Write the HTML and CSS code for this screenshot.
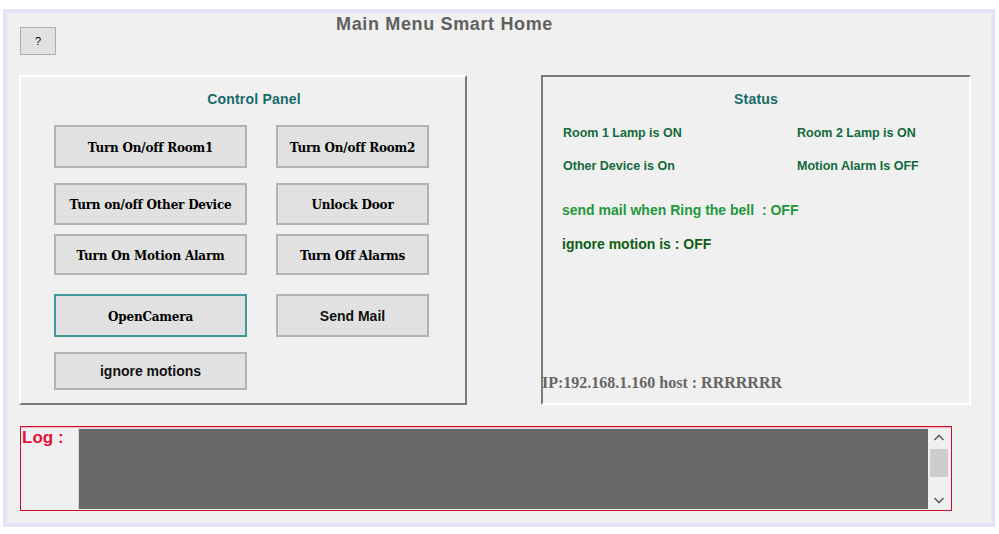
FILE: index.html
```html
<!DOCTYPE html>
<html>
<head>
<meta charset="utf-8">
<title>Main Menu Smart Home</title>
<link rel="stylesheet" href="styles.css">
</head>
<body>
<div class="window">
  <div class="header">
    <button class="help-btn">?</button>
    <h1 class="title">Main Menu Smart Home</h1>
  </div>
  <div class="panels">
    <section class="control-panel">
      <h2 class="group-title cp-title">Control Panel</h2>
      <div class="btn-row row1">
        <button class="btn serif wide">Turn On/off Room1</button>
        <button class="btn serif narrow">Turn On/off Room2</button>
      </div>
      <div class="btn-row row2">
        <button class="btn serif wide">Turn on/off Other Device</button>
        <button class="btn serif narrow">Unlock Door</button>
      </div>
      <div class="btn-row row3">
        <button class="btn serif wide">Turn On Motion Alarm</button>
        <button class="btn serif narrow">Turn Off Alarms</button>
      </div>
      <div class="btn-row row4">
        <button class="btn serif wide focused">OpenCamera</button>
        <button class="btn sans narrow">Send Mail</button>
      </div>
      <div class="btn-row row5">
        <button class="btn sans wide">ignore motions</button>
      </div>
    </section>
    <section class="status-panel">
      <h2 class="group-title">Status</h2>
      <div class="status-grid">
        <span class="stat">Room 1 Lamp is ON</span>
        <span class="stat">Room 2 Lamp is ON</span>
        <span class="stat">Other Device is On</span>
        <span class="stat">Motion Alarm Is OFF</span>
      </div>
      <p class="mail-status">send mail when Ring the bell&nbsp; : OFF</p>
      <p class="motion-status">ignore motion is : OFF</p>
      <p class="ip">IP:192.168.1.160 host : RRRRRRR</p>
    </section>
  </div>
  <div class="log-box">
    <div class="log-label">Log :</div>
    <div class="log-area">
      <div class="log-text"></div>
      <div class="scrollbar">
        <svg class="chev" width="22" height="18" viewBox="0 0 22 18"><path d="M6.5 11 L11 6.5 L15.5 11" fill="none" stroke="#606060" stroke-width="1.6"/></svg>
        <div class="thumb"></div>
        <div class="track"></div>
        <svg class="chev" width="22" height="18" viewBox="0 0 22 18"><path d="M6.5 7 L11 11.5 L15.5 7" fill="none" stroke="#606060" stroke-width="1.6"/></svg>
      </div>
    </div>
  </div>
</div>
</body>
</html>
```
FILE: styles.css
```css
html, body {
  margin: 0;
  padding: 0;
  background: #ffffff;
}

body {
  font-family: "Liberation Sans", Arial, sans-serif;
}

.window {
  box-sizing: border-box;
  margin: 9px 0 0 3px;
  width: 992px;
  height: 518px;
  background: #f0f0f0;
  border: 4px solid #e3e3f8;
}

.header {
  display: flex;
  align-items: flex-start;
  height: 62px;
}

.help-btn {
  box-sizing: border-box;
  margin: 14px 0 0 13px;
  width: 36px;
  height: 28px;
  padding: 0;
  background: #e1e1e1;
  border: 1px solid #adadad;
  font-family: "Liberation Sans", Arial, sans-serif;
  font-size: 11px;
  color: #000;
}

.title {
  margin: 1px 0 0 280px;
  font-size: 18px;
  line-height: 20px;
  font-weight: bold;
  letter-spacing: 0.65px;
  color: #606060;
}

.panels {
  display: flex;
  margin-left: 12px;
}

.control-panel {
  box-sizing: border-box;
  width: 448px;
  height: 330px;
  border-style: solid;
  border-width: 2px;
  border-color: #ffffff #7a7a7a #7a7a7a #ffffff;
  padding: 14px 0 0 33px;
}

.group-title {
  margin: 0;
  font-size: 14px;
  line-height: 17px;
  font-weight: bold;
  letter-spacing: 0.2px;
  color: #176b6b;
  text-align: center;
}

.cp-title {
  margin-left: 148px;
  width: 104px;
}

.btn-row {
  display: flex;
  gap: 29px;
}

.row1 { margin-top: 17px; height: 43px; }
.row2 { margin-top: 15px; height: 42px; }
.row3 { margin-top: 9px; height: 41px; }
.row4 { margin-top: 19px; height: 43px; }
.row5 { margin-top: 15px; height: 38px; }

.btn {
  box-sizing: border-box;
  height: 100%;
  padding: 0;
  background: #e1e1e1;
  border: 2px solid #b2b2b2;
  color: #000;
}

.wide { width: 193px; }
.narrow { width: 153px; }

.serif {
  font-family: "DejaVu Serif", "Liberation Serif", serif;
  font-weight: bold;
  font-size: 12px;
  letter-spacing: -0.2px;
  padding-top: 2px;
}

.sans {
  font-family: "Liberation Sans", Arial, sans-serif;
  font-weight: bold;
  font-size: 14px;
  color: #111;
}

.focused {
  border-color: #3f9a96;
}

.status-panel {
  box-sizing: border-box;
  margin-left: 74px;
  width: 430px;
  height: 330px;
  border-style: solid;
  border-width: 2px;
  border-color: #7a7a7a #ffffff #ffffff #7a7a7a;
  padding-top: 14px;
  display: flex;
  flex-direction: column;
}

.status-grid {
  display: grid;
  grid-template-columns: 234px auto;
  row-gap: 17px;
  margin: 17px 0 0 20px;
}

.stat {
  font-size: 12.5px;
  line-height: 16px;
  font-weight: bold;
  color: #126a3a;
}

.mail-status,
.motion-status {
  margin: 0 0 0 19px;
  font-size: 14px;
  line-height: 18px;
  font-weight: bold;
}

.mail-status {
  margin-top: 27px;
  color: #22983c;
}

.motion-status {
  margin-top: 16px;
  color: #0f5e14;
}

.ip {
  margin: 121px 0 0 -1px;
  font-family: "Liberation Serif", "Times New Roman", serif;
  font-size: 16px;
  line-height: 18px;
  font-weight: bold;
  color: #666666;
}

.log-box {
  box-sizing: border-box;
  display: flex;
  margin: 21px 0 0 13px;
  width: 932px;
  height: 85px;
  border: 1px solid #c8102e;
  box-shadow: inset 0 1px 0 #f2b6c0;
  padding: 1px 1px 1px 0;
}

.log-label {
  width: 56px;
  padding-left: 1px;
  font-size: 17px;
  line-height: 20px;
  font-weight: bold;
  color: #e0103c;
}

.log-area {
  flex: 1;
  display: flex;
  border-left: 1px solid #d6d0ea;
  border-top: 1px solid #e8e4f2;
}

.log-text {
  flex: 1;
  background: #686868;
}

.scrollbar {
  width: 22px;
  background: #f0f0f0;
  display: flex;
  flex-direction: column;
  align-items: center;
}

.chev {
  display: block;
  flex: none;
}

.thumb {
  width: 18px;
  height: 28px;
  margin-top: 2px;
  background: #cdcdcd;
}

.track {
  flex: 1;
}
```
